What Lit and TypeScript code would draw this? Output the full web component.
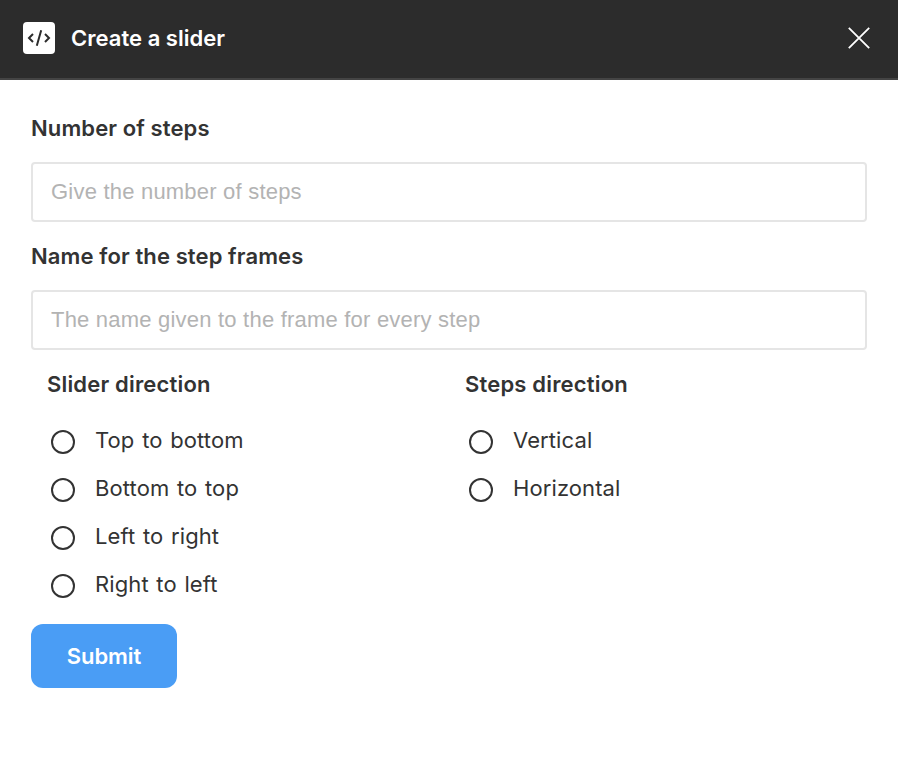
import { LitElement, html, css } from "lit";
import { customElement } from "lit/decorators.js";

@customElement("app-root")
export class AppRoot extends LitElement {
  static styles = css`
    :host { display: block; height: 780px; background: #fff; color: #333; font-family: Inter, sans-serif; font-size: 22px; overflow: hidden; }
    * { box-sizing: border-box; }
    header { height: 80px; background: #2c2c2c; border-bottom: 2px solid #444; display: flex; align-items: center; padding: 0 24px 2px 23px; color: #fff; font-weight: 600; line-height: 32px; }
    .logo { width: 32px; height: 32px; margin-right: 16px; }
    .title { flex: 1; letter-spacing: 0.03px; }
    .close { width: 26px; height: 26px; margin-right: 2px; }
    svg { display: block; }
    main { padding: 32px 31px; }
    .label { font-weight: 600; height: 32px; line-height: 32px; white-space: nowrap; letter-spacing: 0.11px; }
    .groups .label { letter-spacing: 0.18px; }
    .field { display: block; width: 100%; height: 60px; margin: 18px 0; border: 2px solid #e5e5e5; border-radius: 4px; padding: 0 18px; font: 22px "Liberation Sans", sans-serif; letter-spacing: 0.21px; color: #333; outline: 0; }
    .field::placeholder { color: #b3b3b3; opacity: 1; }
    .groups { display: grid; grid-template-columns: 418px 1fr; padding-left: 16px; }
    .options { padding-top: 16px; }
    .option { display: flex; height: 48px; align-items: center; padding-left: 4px; }
    .radio { width: 24px; height: 24px; border: 2px solid #333; border-radius: 50%; margin: 4px 20px 0 0; }
    .text { letter-spacing: 0.1px; word-spacing: 1.4px; }
    .submit { display: block; width: 146px; height: 64px; border: 0; border-radius: 12px; background: #4a9df5; color: #fff; font: 600 22px Inter, sans-serif; letter-spacing: -0.08px; margin-top: 16px; padding: 0; }
  `;
  group(title: string, items: string[]) {
    return html`<div><div class="label">${title}</div><div class="options">${items.map((i) => html`<div class="option"><span class="radio"></span><span class="text">${i}</span></div>`)}</div></div>`;
  }
  render() {
    return html`<header>
      <svg class="logo" viewBox="0 0 32 32"><rect width="32" height="32" rx="4" fill="#fff"/><path d="M10 12 6 16l4 4M22 12l4 4-4 4M18.2 8.2l-4.4 15.6" fill="none" stroke="#2c2c2c" stroke-width="2"/></svg>
      <div class="title">Create a slider</div>
      <svg class="close" viewBox="0 0 26 26"><path d="M2.8 2.8l20.4 20.4M23.2 2.8 2.8 23.2" stroke="#fff" stroke-width="1.8"/></svg>
    </header>
    <main>
      <div class="label">Number of steps</div>
      <input class="field" placeholder="Give the number of steps">
      <div class="label">Name for the step frames</div>
      <input class="field" placeholder="The name given to the frame for every step">
      <div class="groups">
        ${this.group("Slider direction", ["Top to bottom", "Bottom to top", "Left to right", "Right to left"])}
        ${this.group("Steps direction", ["Vertical", "Horizontal"])}
      </div>
      <button class="submit">Submit</button>
    </main>`;
  }
}
